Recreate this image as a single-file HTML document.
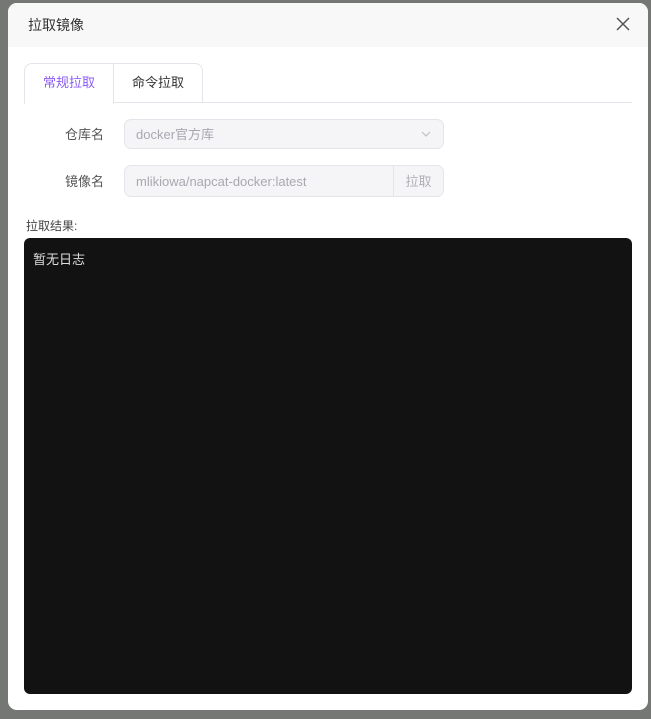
<!DOCTYPE html>
<html><head><meta charset="utf-8"><style>
*{box-sizing:border-box;margin:0;padding:0}
body{width:651px;height:719px;background:#757775;font-family:"Liberation Sans","Noto Sans CJK SC",sans-serif;font-size:13px;position:relative;overflow:hidden}
.dlg{position:absolute;left:8px;top:3px;width:640px;height:707px;background:#fff;border-radius:9px;overflow:hidden}
.hd{height:44px;background:#f8f8f8;padding-left:20px;line-height:44px;font-size:14px;color:#333}
.x{position:absolute;right:18px;top:14px}
.tabs{position:absolute;left:16px;top:60px;width:608px;height:40px;border-bottom:1px solid #e4e4ea}
.tab{position:absolute;top:0;height:40px;border:1px solid #e4e4ea;line-height:38px;text-align:center;background:#fff}
.t1{left:0;width:90px;border-radius:8px 0 0 0;border-bottom:1px solid #fff;color:#8b5cf6;height:41px}
.t2{left:89px;width:90px;border-radius:0 8px 0 0;color:#333}
.lbl{position:absolute;left:0;width:96px;text-align:right;color:#555}
.inp{position:absolute;left:116px;width:320px;background:#f5f5f7;border:1px solid #e4e4ea;border-radius:7px;color:#a8a8b0;padding-left:11px}
.res{position:absolute;left:18px;top:214px;color:#444;font-size:12px}
.term{position:absolute;left:16px;top:235px;width:608px;height:456px;background:#121212;border-radius:6px;color:#ddd;padding:11px 9px}
</style></head><body>
<div class="dlg">
<div class="hd">拉取镜像</div>
<svg class="x" width="14" height="14" viewBox="0 0 14 14"><path d="M1 1L13 13M13 1L1 13" stroke="#555" stroke-width="1.5"/></svg>
<div class="tabs"><div class="tab t1">常规拉取</div><div class="tab t2">命令拉取</div></div>
<div class="lbl" style="top:121px">仓库名</div>
<div class="inp" style="top:116px;height:30px;line-height:29px">docker官方库<svg style="position:absolute;right:12px;top:11px" width="10" height="6" viewBox="0 0 10 6"><path d="M1 1L5 5L9 1" stroke="#bbb" fill="none"/></svg></div>
<div class="lbl" style="top:168px">镜像名</div>
<div class="inp" style="top:162px;height:32px;line-height:31px">mlikiowa/napcat-docker:latest<div style="position:absolute;right:0;top:0;width:50px;height:30px;border-left:1px solid #e4e4ea;text-align:center;color:#b0b0b8">拉取</div></div>
<div class="res">拉取结果:</div>
<div class="term">暂无日志</div>
</div>
</body></html>
